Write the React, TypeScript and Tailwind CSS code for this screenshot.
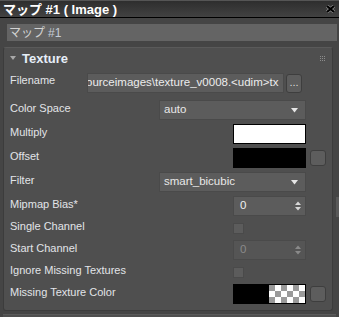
import type { ReactNode } from "react"

function DropArrow() {
  return (
    <svg width="7" height="5" viewBox="0 0 7 5" className="shrink-0">
      <path d="M0 0 L7 0 L3.5 4.5 Z" fill="#e6e6e6" />
    </svg>
  )
}

function SpinArrows({ dim }: { dim?: boolean }) {
  const c = dim ? "#8a8a8a" : "#d8d8d8"
  return (
    <svg width="6" height="10" viewBox="0 0 6 10" className="shrink-0">
      <path d="M0 4 L6 4 L3 0.5 Z" fill={c} />
      <path d="M0 6 L6 6 L3 9.5 Z" fill={c} />
    </svg>
  )
}

function SmallButton({ children, tall }: { children?: ReactNode; tall?: boolean }) {
  return (
    <div
      className={
        "w-[16px] shrink-0 rounded-[3px] border border-[#3e3e3e] bg-[#5d5d5d] flex items-end justify-center text-[#dcdcdc] text-[11px] leading-none pb-[4px] " +
        (tall ? "h-[19px]" : "h-[16px]")
      }
    >
      {children}
    </div>
  )
}

function Row({
  label,
  h = "h-[20px]",
  children,
  trailing,
}: {
  label: string
  h?: string
  children: ReactNode
  trailing?: ReactNode
}) {
  return (
    <div className={"flex items-center " + h}>
      <div className="flex-1 pl-[6px] pb-[4px] text-[11px] text-[#e2e4e8] whitespace-nowrap">{label}</div>
      {children}
      <div className="w-[26px] shrink-0 flex items-center pl-[4px]">{trailing}</div>
    </div>
  )
}

function Dropdown({ value }: { value: string }) {
  return (
    <div className="w-[147px] h-[20px] bg-[#5c5c5c] border border-[#4a4a4a] flex items-center pl-[4px] pr-[7px] text-[11.5px] text-[#e8e8e8]">
      <span className="flex-1">{value}</span>
      <DropArrow />
    </div>
  )
}

function Spinner({ value, dim }: { value: string; dim?: boolean }) {
  return (
    <div
      className={
        "w-[73px] h-[20px] border border-[#4a4a4a] flex items-center pl-[6px] pr-[4px] text-[11.5px] " +
        (dim ? "bg-[#555555] text-[#8a8a8a]" : "bg-[#5c5c5c] text-[#f0f0f0]")
      }
    >
      <span className="flex-1">{value}</span>
      <SpinArrows dim={dim} />
    </div>
  )
}

function Checkbox() {
  return (
    <div className="w-[73px] flex">
      <div className="w-[11px] h-[11px] bg-[#5c5c5c] border border-[#4a4a4a]" />
    </div>
  )
}

export default function App() {
  return (
    <div className="w-[339px] h-[317px] overflow-hidden bg-[#454545] font-['Liberation_Sans','Noto_Sans_CJK_JP',sans-serif] flex flex-col">
      {/* title bar */}
      <div className="h-[18px] shrink-0 bg-gradient-to-b from-[#2e2e2e] to-[#424242] border-t border-[#555] border-b border-b-black flex items-center pl-[3px] pr-[4px]">
        <span className="flex-1 text-[13px] font-bold text-white leading-none pt-[1px]">マップ #1 ( Image )</span>
        <svg width="9" height="8" viewBox="0 0 9 8">
          <path d="M1 1 L8 7 M8 1 L1 7" stroke="#8a8a8a" strokeWidth="3.4" />
          <path d="M1 1 L8 7 M8 1 L1 7" stroke="#000" strokeWidth="2.2" />
        </svg>
      </div>

      {/* name field */}
      <div className="mt-[6px] ml-[7px] mr-[2px] h-[17px] shrink-0 bg-[#646464] flex items-center pl-[2px] text-[12px] text-[#d2d2d2] leading-none">
        マップ <span className="ml-[3px] text-[#c4ccd6]">#1</span>
      </div>

      <div className="flex flex-1 mt-[6px]">
        {/* rollout panel */}
        <div className="ml-[3px] w-[330px] h-[264px] shrink-0 rounded-[3px] border border-[#3c3c3c] border-t-[#5a5a5a] bg-[#4f4f4f] flex flex-col">
          <div className="h-[21px] flex items-center pl-[6px] pr-[7px]">
            <svg width="6" height="4" viewBox="0 0 6 4" className="mb-[1px]">
              <path d="M0 0 L6 0 L3 4 Z" fill="#a8a8a8" />
            </svg>
            <span className="ml-[6px] flex-1 text-[13px] font-bold text-[#e6eef8]">Texture</span>
            <div className="grid grid-cols-3 gap-[1px]">
              {Array.from({ length: 9 }).map((_, i) => (
                <div key={i} className="w-[1px] h-[1px] bg-[#8c8c8c]" />
              ))}
            </div>
          </div>

          <div className="flex flex-col pt-[4px]">
            <div className="flex items-center h-[20px]">
              <div className="flex-1 pl-[6px] pb-[6px] text-[11px] text-[#e2e4e8]">Filename</div>
              <div className="w-[197px] h-[20px] bg-[#5c5c5c] border border-[#4a4a4a] overflow-hidden flex items-center text-[11.5px] text-[#ececec] whitespace-nowrap">
                <span className="-ml-[2px]">ourceimages\texture_v0008.&lt;udim&gt;tx</span>
              </div>
              <div className="ml-[2px] mr-[4px]">
                <SmallButton tall>...</SmallButton>
              </div>
              <div className="w-[26px] shrink-0" />
            </div>

            <div className="flex flex-col gap-[4px] mt-[7px]">
              <Row label="Color Space">
                <Dropdown value="auto" />
              </Row>
              <Row label="Multiply">
                <div className="w-[73px] h-[20px] bg-white border border-black" />
              </Row>
              <Row label="Offset" trailing={<SmallButton />}>
                <div className="w-[73px] h-[20px] bg-black" />
              </Row>
              <Row label="Filter">
                <Dropdown value="smart_bicubic" />
              </Row>
              <Row label="Mipmap Bias*">
                <Spinner value="0" />
              </Row>
              <Row label="Single Channel" h="h-[16px]">
                <Checkbox />
              </Row>
              <Row label="Start Channel">
                <Spinner value="0" dim />
              </Row>
              <Row label="Ignore Missing Textures" h="h-[16px]">
                <Checkbox />
              </Row>
              <Row label="Missing Texture Color" trailing={<SmallButton />}>
                <div className="w-[73px] h-[20px] border border-black flex">
                  <div className="w-[35px] bg-black" />
                  <div className="flex-1 bg-[#9a9a9a] bg-[repeating-conic-gradient(#ffffff_0_25%,#9a9a9a_0_50%)] bg-[length:12px_12px]" />
                </div>
              </Row>
            </div>
          </div>
        </div>

        {/* side scrollbar */}
        <div className="ml-[3px] flex-1 flex flex-col">
          <div className="h-[150px]" />
          <div className="h-[20px] bg-[#595959]" />
        </div>
      </div>

      <div className="h-[3px] ml-[3px] mr-[3px] shrink-0 border-t border-[#5a5a5a] bg-[#4f4f4f]" />
    </div>
  )
}
